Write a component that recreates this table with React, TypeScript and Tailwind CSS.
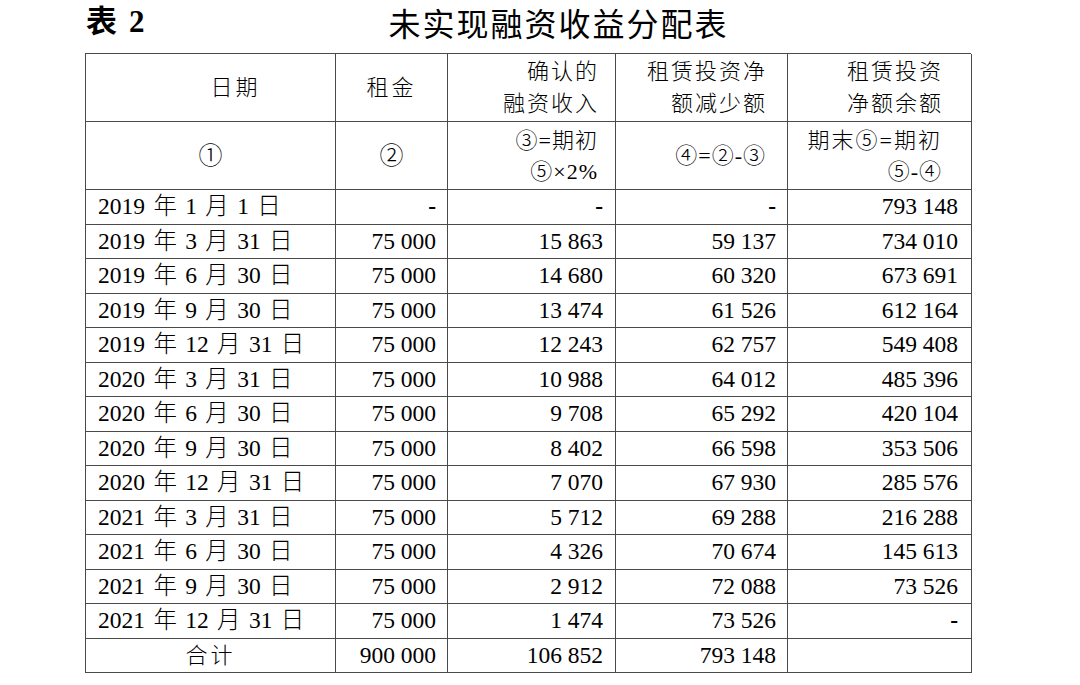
import React from "react";

const FONT = { fontFamily: "'Liberation Serif', 'Noto Sans CJK SC', serif" };

const rows: string[][] = [
  ["2019 年 1 月 1 日", "-", "-", "-", "793 148"],
  ["2019 年 3 月 31 日", "75 000", "15 863", "59 137", "734 010"],
  ["2019 年 6 月 30 日", "75 000", "14 680", "60 320", "673 691"],
  ["2019 年 9 月 30 日", "75 000", "13 474", "61 526", "612 164"],
  ["2019 年 12 月 31 日", "75 000", "12 243", "62 757", "549 408"],
  ["2020 年 3 月 31 日", "75 000", "10 988", "64 012", "485 396"],
  ["2020 年 6 月 30 日", "75 000", "9 708", "65 292", "420 104"],
  ["2020 年 9 月 30 日", "75 000", "8 402", "66 598", "353 506"],
  ["2020 年 12 月 31 日", "75 000", "7 070", "67 930", "285 576"],
  ["2021 年 3 月 31 日", "75 000", "5 712", "69 288", "216 288"],
  ["2021 年 6 月 30 日", "75 000", "4 326", "70 674", "145 613"],
  ["2021 年 9 月 30 日", "75 000", "2 912", "72 088", "73 526"],
  ["2021 年 12 月 31 日", "75 000", "1 474", "73 526", "-"],
];

const cell = "border-r border-b border-[#4a4a4a] flex items-center";
const numPad = ["", "pr-[11px]", "pr-[12px]", "pr-[11px]", "pr-[13px]"];

function Val({ v }: { v: string }) {
  if (v === "-") return <span className="font-bold">-</span>;
  return <span>{v}</span>;
}

export default function App() {
  return (
    <div className="w-[1080px] h-[685px] bg-white text-black" style={FONT}>
      <div className="flex items-center h-[53px] pl-[86px] pb-[10px]">
        <div className="flex items-center text-[31px] font-bold leading-none">
          <span>表</span>
          <span className="ml-[12px]">2</span>
        </div>
        <div
          className="ml-[244px] text-[32px] leading-none tracking-[2px] font-normal"
          style={{ fontFamily: "'Noto Sans CJK SC', sans-serif" }}
        >
          未实现融资收益分配表
        </div>
      </div>
      <div className="ml-[85px] w-[886px] grid grid-cols-[250px_112px_168px_172px_184px] grid-rows-[68px_68px_repeat(14,34.5px)] border-l border-t border-[#4a4a4a] text-[23.5px] font-light">
        {/* header row 1 */}
        <div className={`${cell} justify-center pl-[50px] text-[22px] tracking-[3px]`}>日期</div>
        <div className={`${cell} justify-center text-[22px] tracking-[3px]`}>租金</div>
        <div className={`${cell} flex-col !items-end justify-center pr-[16px] text-[22px] tracking-[2px] leading-[32px]`}>
          <div>确认的</div>
          <div>融资收入</div>
        </div>
        <div className={`${cell} flex-col !items-end justify-center pr-[20px] text-[22px] tracking-[2px] leading-[32px]`}>
          <div>租赁投资净</div>
          <div>额减少额</div>
        </div>
        <div className={`${cell} flex-col !items-end justify-center pr-[28px] text-[22px] tracking-[2px] leading-[32px]`}>
          <div>租赁投资</div>
          <div>净额余额</div>
        </div>
        {/* header row 2 */}
        <div className={`${cell} justify-center text-[24px]`}>①</div>
        <div className={`${cell} justify-center text-[24px]`}>②</div>
        <div className={`${cell} flex-col !items-end justify-center pr-[17px] text-[22px] leading-[31px]`}>
          <div className="tracking-[1px]">③=期初</div>
          <div className="tracking-[1px]">⑤×2%</div>
        </div>
        <div className={`${cell} justify-end pr-[21px] text-[22px] tracking-[1px]`}>④=②-③</div>
        <div className={`${cell} flex-col !items-end justify-center pr-[29px] text-[22px] leading-[31px]`}>
          <div className="tracking-[2px]">期末⑤=期初</div>
          <div className="tracking-[1px]">⑤-④</div>
        </div>
        {/* data rows */}
        {rows.map((r, i) => (
          <React.Fragment key={i}>
            <div className={`${cell} pl-[12px] whitespace-pre [word-spacing:2.5px]`}>{r[0]}</div>
            {r.slice(1).map((v, j) => (
              <div key={j} className={`${cell} justify-end ${numPad[j + 1]}`}>
                <Val v={v} />
              </div>
            ))}
          </React.Fragment>
        ))}
        {/* total */}
        <div className={`${cell} justify-center text-[22px] tracking-[3px]`}>合计</div>
        <div className={`${cell} justify-end pr-[11px]`}>900 000</div>
        <div className={`${cell} justify-end pr-[12px]`}>106 852</div>
        <div className={`${cell} justify-end pr-[11px]`}>793 148</div>
        <div className={`${cell}`}></div>
      </div>
    </div>
  );
}
